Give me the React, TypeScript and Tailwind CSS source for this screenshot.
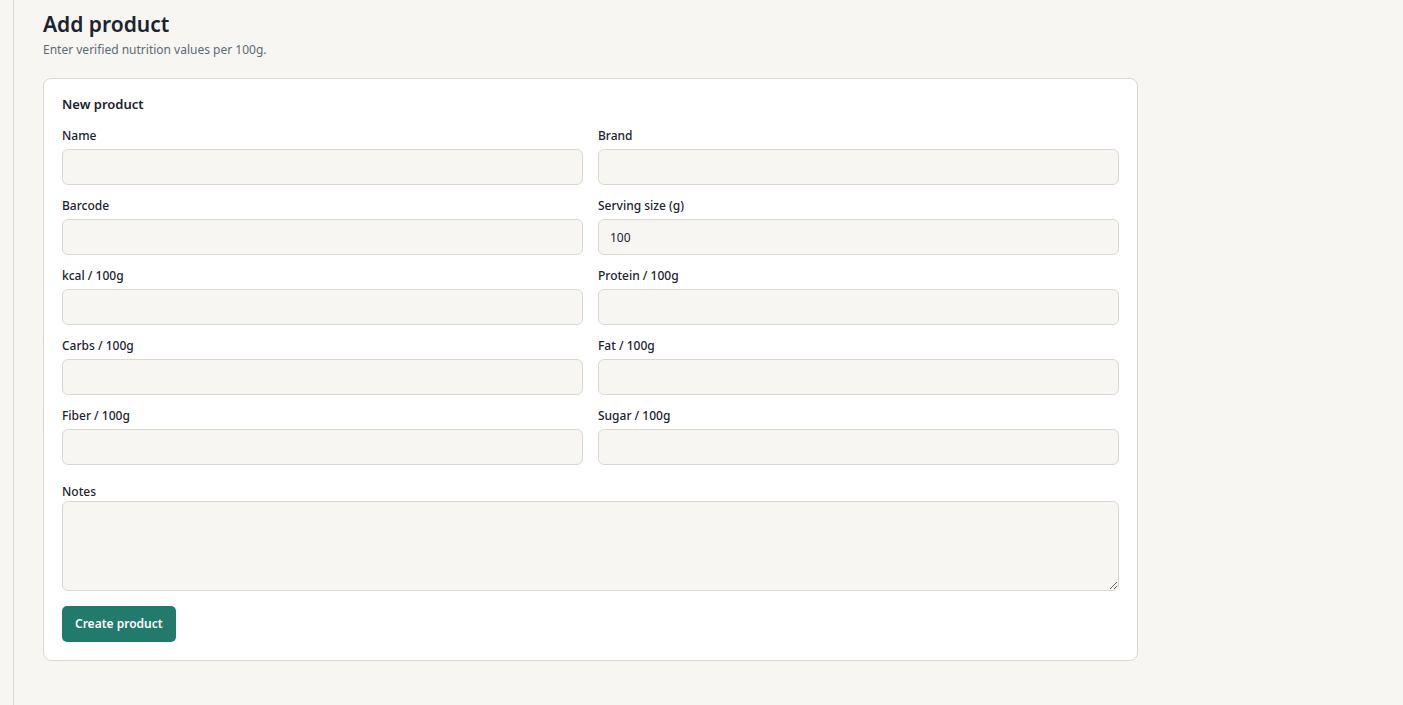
import React from "react";

const font = { fontFamily: '"Noto Sans", "Open Sans", sans-serif' };

function Field({ label, value }: { label: string; value?: string }) {
  return (
    <div className="flex flex-col">
      <label className="text-[12px] leading-[16px] font-medium text-[#1b2230] pt-[1px] mb-[5px]">{label}</label>
      <input
        defaultValue={value}
        className="h-[36px] rounded-[6px] border border-[#ddd8cf] bg-[#f7f6f2] px-[11px] text-[12px] text-[#1b2230] outline-none"
      />
    </div>
  );
}

export default function App() {
  const fields: [string, string?][] = [
    ["Name"],
    ["Brand"],
    ["Barcode"],
    ["Serving size (g)", "100"],
    ["kcal / 100g"],
    ["Protein / 100g"],
    ["Carbs / 100g"],
    ["Fat / 100g"],
    ["Fiber / 100g"],
    ["Sugar / 100g"],
  ];
  return (
    <div className="min-h-[705px] w-full bg-[#f7f6f2] flex" style={font}>
      <div className="w-[14px] shrink-0 border-r border-[#ddd8cf]" />
      <main className="flex-1 pl-[29px] pt-[10px]">
        <div className="w-[1095px]">
          <h1 className="text-[21px] leading-[28px] font-semibold text-[#1b2230]">Add product</h1>
          <p className="text-[12px] leading-[16px] text-[#5b6b78] mt-[4px]">Enter verified nutrition values per 100g.</p>
          <div className="mt-[20px] bg-white border border-[#ddd8cf] rounded-[8px] px-[18px] pt-[17px] pb-[18px]">
            <h2 className="text-[13px] leading-[16px] font-semibold text-[#1b2230] mb-[15px]">New product</h2>
            <div className="grid grid-cols-2 gap-x-[15px] gap-y-[12px]">
              {fields.map(([l, v]) => (
                <Field key={l} label={l} value={v} />
              ))}
            </div>
            <div className="flex flex-col mt-[18px]">
              <label className="text-[12px] leading-[16px] font-medium text-[#1b2230] pt-[1px] mb-[1px]">Notes</label>
              <textarea className="h-[90px] rounded-[6px] border border-[#ddd8cf] bg-[#f7f6f2] px-[11px] py-[8px] text-[12px] outline-none" />
            </div>
            <button className="mt-[15px] h-[36px] px-[13px] rounded-[5px] bg-[#217a6b] text-white text-[12px] font-semibold">
              Create product
            </button>
          </div>
        </div>
      </main>
    </div>
  );
}
